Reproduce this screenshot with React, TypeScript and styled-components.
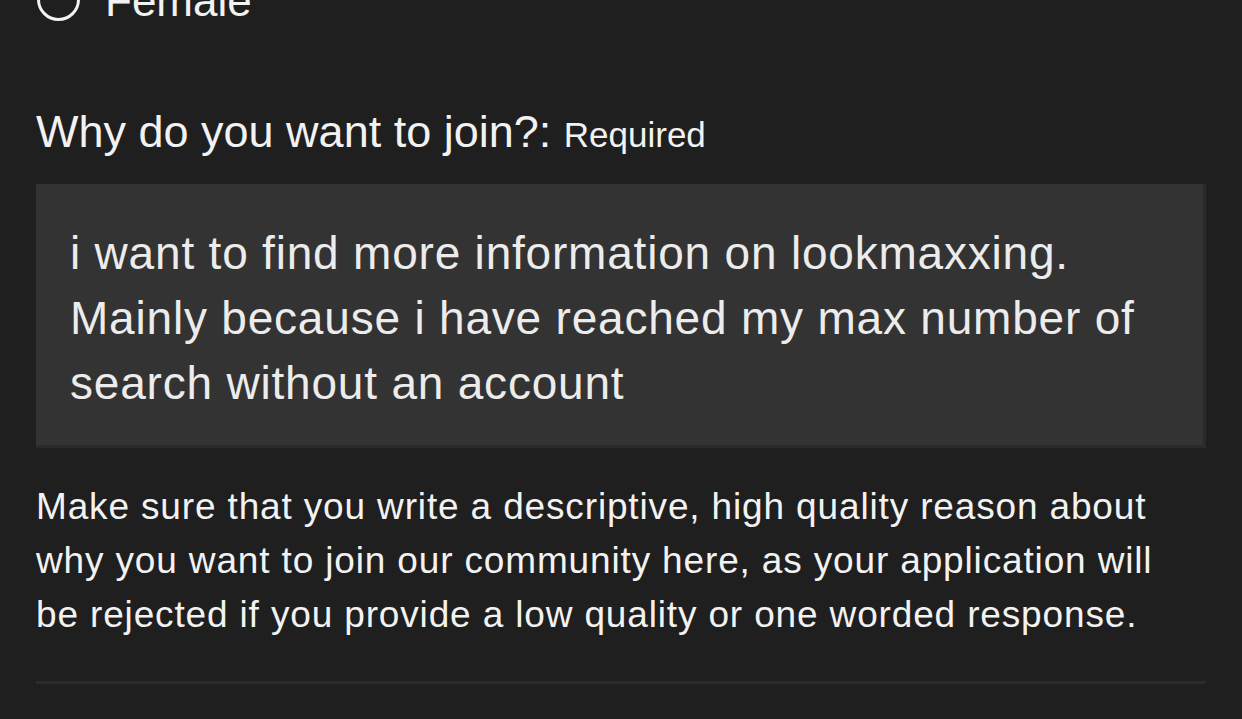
import React from "react";
import styled, { createGlobalStyle } from "styled-components";

const Global = createGlobalStyle`
  html, body { margin: 0; padding: 0; background: #1f1f1f; }
  body { font-family: "Liberation Sans", Arial, Helvetica, sans-serif; color: #f0f0f0; overflow: hidden; }
`;

const Page = styled.div`
  width: 1242px;
  height: 719px;
  box-sizing: border-box;
  padding: 0 36px;
  background: #1f1f1f;
  overflow: hidden;
  display: flex;
  flex-direction: column;
`;

const RadioRow = styled.label`
  display: flex;
  align-items: center;
  gap: 25px;
  margin-top: -26px;
  padding-left: 1px;
  height: 54px;
  font-size: 44px;
  line-height: 54px;
  color: #f2f2f2;
`;

const RadioCircle = styled.span`
  width: 43px;
  height: 43px;
  box-sizing: border-box;
  border-radius: 50%;
  border: 3px solid #f2f2f2;
  flex: none;
  margin-top: -4px;
`;

const Label = styled.div`
  margin-top: 77px;
  font-size: 45px;
  line-height: 54px;
  color: #f2f2f2;
  white-space: nowrap;
`;

const Required = styled.span`
  font-size: 35px;
`;

const AnswerBox = styled.div`
  margin-top: 22px;
  background: #333333;
  border-right: 3px solid #2a2a2a;
  border-bottom: 3px solid #2a2a2a;
  padding: 37px 30px 29px 34px;
  font-size: 46px;
  letter-spacing: 0.8px;
  line-height: 65px;
  color: #ececec;
`;

const Hint = styled.p`
  margin: 32px 0 0;
  font-size: 37px;
  letter-spacing: 0.85px;
  line-height: 54px;
  color: #f2f2f2;
`;

const Divider = styled.hr`
  margin: 39px 0 0;
  border: none;
  height: 3px;
  background: #2b2b2b;
`;

export default function App() {
  return (
    <>
      <Global />
      <Page>
        <RadioRow>
          <RadioCircle />
          Female
        </RadioRow>
        <Label>
          Why do you want to join?: <Required>Required</Required>
        </Label>
        <AnswerBox>
          i want to find more information on lookmaxxing.
          <br />
          Mainly because i have reached my max number of search without an account
        </AnswerBox>
        <Hint>
          Make sure that you write a descriptive, high quality reason about why you want to join our
          community here, as your application will be rejected if you provide a low quality or one
          worded response.
        </Hint>
        <Divider />
      </Page>
    </>
  );
}
